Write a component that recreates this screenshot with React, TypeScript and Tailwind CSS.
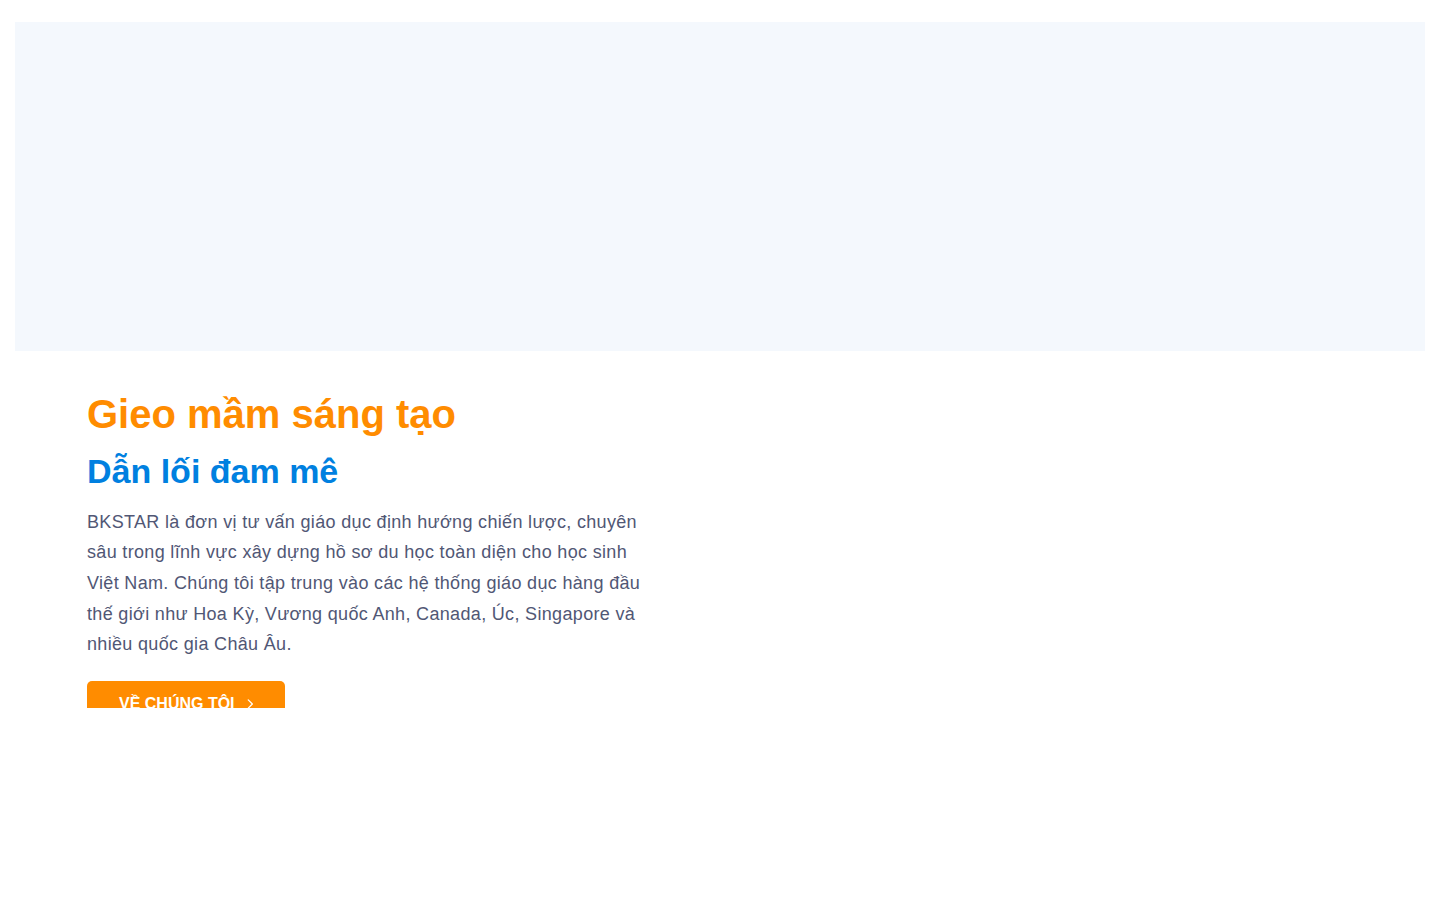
import React from 'react';

const ChevronRight: React.FC<{ className?: string }> = ({ className }) => (
  <svg className={className} viewBox="0 0 24 24" fill="none" stroke="currentColor" strokeWidth="2.2" strokeLinecap="round" strokeLinejoin="round">
    <path d="M9 5l7 7-7 7" />
  </svg>
);

const App: React.FC = () => {
  return (
    <div className="min-h-[900px] bg-white px-[15px] pt-[22px] font-['Liberation_Sans',Arial,sans-serif]">
      {/* banner placeholder */}
      <div className="h-[329px] w-full bg-[#f4f8fd]" />

      <section className="h-[357px] overflow-hidden">
        <div className="pl-[72px] pt-[39px]">
          <div className="w-[560px]">
            <h1 className="text-[40px] font-bold leading-[1.2] text-[#ff8c00]">Gieo mầm sáng tạo</h1>
            <h2 className="mt-[13px] text-[34px] font-bold leading-[1.2] text-[#0080e0]">Dẫn lối đam mê</h2>
            <p className="mt-[15px] text-[18px] leading-[1.7] tracking-[0.33px] text-[#515775]">
              BKSTAR là đơn vị tư vấn giáo dục định hướng chiến lược, chuyên sâu trong lĩnh vực xây dựng hồ sơ du học toàn diện cho học sinh Việt Nam. Chúng tôi tập trung vào các hệ thống giáo dục hàng đầu thế giới như Hoa Kỳ, Vương quốc Anh, Canada, Úc, Singapore và nhiều quốc gia Châu Âu.
            </p>
            <button className="mt-[21px] flex w-[198px] items-center gap-2 rounded-[5px] bg-[#ff8c00] pb-3 pl-8 pt-[11px] text-[16px] font-bold uppercase leading-[1.5] text-white">
              Về chúng tôi
              <ChevronRight className="h-[14px] w-[14px]" />
            </button>
          </div>
        </div>
      </section>
    </div>
  );
};

export default App;
